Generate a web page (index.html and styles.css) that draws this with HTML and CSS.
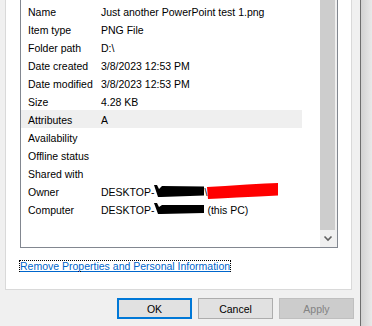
FILE: index.html
```html
<!DOCTYPE html>
<html>
<head>
<meta charset="utf-8">
<link rel="stylesheet" href="styles.css">
</head>
<body>
<div class="window">
  <div class="dialog">
    <div class="panel">
      <div class="listbox">
        <div class="rows">
          <div class="row"><span class="label">Name</span><span class="value">Just another PowerPoint test 1.png</span></div>
          <div class="row"><span class="label">Item type</span><span class="value">PNG File</span></div>
          <div class="row"><span class="label">Folder path</span><span class="value">D:\</span></div>
          <div class="row"><span class="label">Date created</span><span class="value">3/8/2023 12:53 PM</span></div>
          <div class="row"><span class="label">Date modified</span><span class="value">3/8/2023 12:53 PM</span></div>
          <div class="row"><span class="label">Size</span><span class="value">4.28 KB</span></div>
          <div class="row hl"><span class="label">Attributes</span><span class="value">A</span></div>
          <div class="row"><span class="label">Availability</span><span class="value"></span></div>
          <div class="row"><span class="label">Offline status</span><span class="value"></span></div>
          <div class="row"><span class="label">Shared with</span><span class="value"></span></div>
          <div class="row"><span class="label">Owner</span><span class="value">DESKTOP-<svg class="redact" width="50" height="16" viewBox="0 0 50 16"><path d="M0 1 L3 1 L5 5 L8 2 L50 2.5 L50 11.5 L7 13 L4 13 Z" fill="#000"/></svg>\<svg class="redact" width="71" height="16" viewBox="0 0 71 16"><path d="M0 3 L18 2 L40 0.5 L58 -0.5 L71 -1 L71 11.5 L52 12.5 L30 13.5 L12 14.5 L1 15 Z" fill="#ff0000"/></svg></span></div>
          <div class="row"><span class="label">Computer</span><span class="value">DESKTOP-<svg class="redact" width="50" height="16" viewBox="0 0 50 16"><path d="M0 1 L3 1 L5 5 L8 3 L50 3 L50 11 L7 12 L4 12 Z" fill="#000"/></svg> (this PC)</span></div>
        </div>
        <div class="scrollbar">
          <div class="thumb"></div>
          <div class="arrow">
            <svg width="17" height="17" viewBox="0 0 17 17"><path d="M4.5 6.5 L8 10 L11.5 6.5" fill="none" stroke="#606060" stroke-width="1.6"/></svg>
          </div>
        </div>
      </div>
      <div class="linkline"><a class="link">Remove Properties and Personal Information</a></div>
    </div>
    <div class="buttons">
      <button class="btn default">OK</button>
      <button class="btn">Cancel</button>
      <button class="btn disabled">Apply</button>
    </div>
  </div>
  <div class="outside"></div>
</div>
</body>
</html>
```
FILE: styles.css
```css
html, body {
  margin: 0;
  padding: 0;
}
body {
  width: 372px;
  height: 326px;
  overflow: hidden;
  font-family: "Liberation Sans", Arial, sans-serif;
  font-size: 10.5px;
  color: #000;
}
.window {
  display: flex;
  height: 326px;
}
.dialog {
  width: 360px;
  height: 326px;
  background: #f0f0f0;
  border-right: 1px solid #6e6e6e;
  flex: none;
}
.outside {
  flex: 1;
  background: linear-gradient(to right, #d2d2d2, #e9e9e9);
}
.panel {
  margin-left: 5px;
  width: 345px;
  height: 289px;
  background: #fff;
  border: 1px solid #d9d9d9;
  border-top: none;
}
.listbox {
  margin-left: 14px;
  width: 316px;
  height: 247px;
  border: 1px solid #828790;
  border-top: none;
  display: flex;
}
.rows {
  width: 299px;
  padding-top: 2px;
}
.row {
  display: grid;
  grid-template-columns: 80px auto;
  width: 281px;
  height: 18px;
  box-sizing: border-box;
  padding-top: 2px;
  line-height: 16px;
  white-space: nowrap;
}
.row.hl {
  background: #efefef;
}
.label {
  padding-left: 7px;
}
.redact {
  vertical-align: top;
  overflow: visible;
}
.scrollbar {
  width: 17px;
  background: #f0f0f0;
  display: flex;
  flex-direction: column;
}
.thumb {
  width: 15px;
  height: 230px;
  background: #cdcdcd;
}
.arrow {
  height: 17px;
}
.arrow svg {
  display: block;
}
.linkline {
  margin-top: 12px;
  margin-left: 13px;
}
.link {
  display: inline-block;
  height: 10px;
  line-height: 10px;
  border: 1px dotted #000;
  color: #0066cc;
  text-decoration: underline;
  white-space: nowrap;
}
.buttons {
  display: flex;
  justify-content: flex-end;
  gap: 6px;
  padding-right: 6px;
  margin-top: 8px;
}
.btn {
  width: 75px;
  height: 21px;
  box-sizing: border-box;
  margin: 0;
  padding: 0;
  font-family: "Liberation Sans", Arial, sans-serif;
  font-size: 10.5px;
  color: #000;
  background: #e1e1e1;
  border: 1px solid #adadad;
  border-radius: 0;
}
.btn.default {
  border-color: #0078d7;
  box-shadow: inset 0 0 0 1px #0078d7;
}
.btn.disabled {
  background: #cccccc;
  border-color: #bfbfbf;
  color: #838383;
}
```
